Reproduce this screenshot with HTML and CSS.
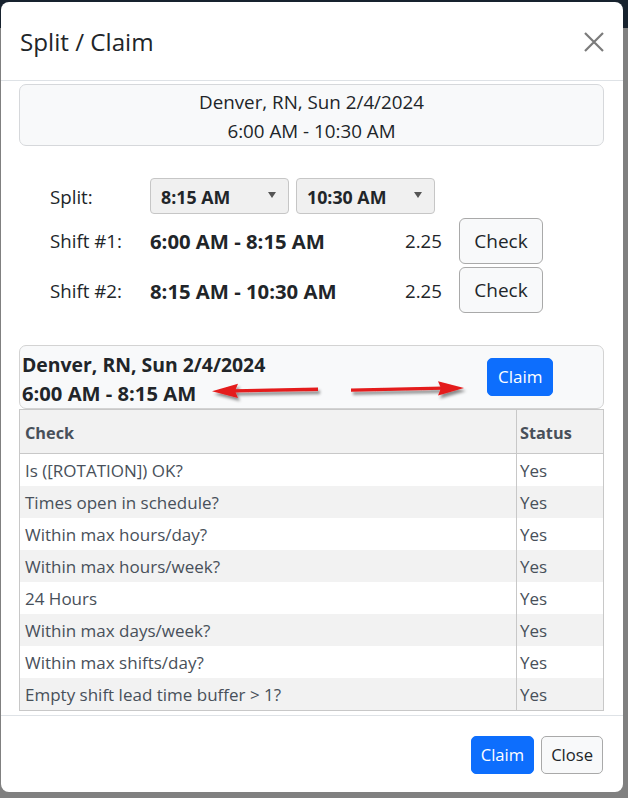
FILE: index.html
```html
<!DOCTYPE html>
<html lang="en">
<head>
<meta charset="utf-8">
<title>Split / Claim</title>
<link rel="stylesheet" href="styles.css">
</head>
<body>
<div class="modal">
  <div class="modal-header">
    <h5 class="modal-title">Split / Claim</h5>
    <button class="btn-close" aria-label="Close">
      <svg width="20" height="20" viewBox="0 0 20 20"><path d="M1 1 L19 19 M19 1 L1 19" stroke="#7b7b7b" stroke-width="2.2" fill="none"/></svg>
    </button>
  </div>
  <div class="modal-body">
    <div class="shift-box">
      <div>Denver, RN, Sun 2/4/2024</div>
      <div>6:00 AM - 10:30 AM</div>
    </div>

    <div class="split-grid">
      <div class="lbl lbl-split">Split:</div>
      <div class="selects">
        <div class="select"><span>8:15 AM</span><svg class="caret" width="8" height="6" viewBox="0 0 8 6"><path d="M0 0 H8 L4 6 Z" fill="#555"/></svg></div>
        <div class="select"><span>10:30 AM</span><svg class="caret" width="8" height="6" viewBox="0 0 8 6"><path d="M0 0 H8 L4 6 Z" fill="#555"/></svg></div>
      </div>

      <div class="lbl">Shift #1:</div>
      <div class="val">6:00 AM - 8:15 AM</div>
      <div class="hrs">2.25</div>
      <button class="btn btn-light btn-check">Check</button>

      <div class="lbl">Shift #2:</div>
      <div class="val">8:15 AM - 10:30 AM</div>
      <div class="hrs">2.25</div>
      <button class="btn btn-light btn-check">Check</button>
    </div>

    <div class="claim-card">
      <div class="claim-text">
        <div>Denver, RN, Sun 2/4/2024</div>
        <div class="claim-time">6:00 AM - 8:15 AM</div>
      </div>
      <button class="btn btn-primary">Claim</button>
      <svg class="arrows" width="585" height="64" viewBox="0 0 585 64">
        <defs>
          <filter id="sh" x="-10%" y="-50%" width="120%" height="250%">
            <feDropShadow dx="2" dy="3" stdDeviation="1.6" flood-color="#000" flood-opacity="0.45"/>
          </filter>
        </defs>
        <g filter="url(#sh)" fill="#e41b1b">
          <path d="M299 42.6 L299 46 L214 47.6 L214 44.2 Z"/>
          <path d="M193 46.2 L219 38.8 L216 46 L219 53 Z"/>
          <path d="M332 43.4 L332 46.8 L424 44.8 L424 41.4 Z"/>
          <path d="M445 43 L419 36.2 L422 43.2 L419 50.4 Z"/>
        </g>
      </svg>
    </div>

    <table class="checks">
      <colgroup><col class="c1"><col class="c2"></colgroup>
      <thead>
        <tr><th>Check</th><th>Status</th></tr>
      </thead>
      <tbody>
        <tr><td>Is ([ROTATION]) OK?</td><td>Yes</td></tr>
        <tr><td>Times open in schedule?</td><td>Yes</td></tr>
        <tr><td>Within max hours/day?</td><td>Yes</td></tr>
        <tr><td>Within max hours/week?</td><td>Yes</td></tr>
        <tr><td>24 Hours</td><td>Yes</td></tr>
        <tr><td>Within max days/week?</td><td>Yes</td></tr>
        <tr><td>Within max shifts/day?</td><td>Yes</td></tr>
        <tr><td>Empty shift lead time buffer &gt; 1?</td><td>Yes</td></tr>
      </tbody>
    </table>
  </div>
  <div class="modal-footer">
    <button class="btn btn-primary btn-foot">Claim</button>
    <button class="btn btn-light btn-foot">Close</button>
  </div>
</div>
</body>
</html>
```

FILE: styles.css
```css
* { box-sizing: border-box; }

html {
  background: linear-gradient(#17222e, #17222e) top left / 100% 28px no-repeat, #808080;
}

body {
  margin: 0;
  font-family: "Open Sans", "Noto Sans", sans-serif;
  color: #212529;
}

.modal {
  margin: 2px 0 0 1px;
  width: 622px;
  height: 790px;
  background: #fff;
  border-radius: 8px;
  display: flex;
  flex-direction: column;
  overflow: hidden;
}

.modal-header {
  height: 79px;
  flex: none;
  border-bottom: 1px solid #dee2e6;
  display: flex;
  align-items: center;
  justify-content: space-between;
  padding: 2px 19px 0 19px;
}

.modal-title {
  margin: 0;
  font-size: 24.2px;
  font-weight: 400;
  line-height: 1.2;
}

.btn-close {
  width: 20px;
  height: 20px;
  padding: 0;
  border: 0;
  background: none;
  display: block;
}
.btn-close svg { display: block; }

.modal-body {
  height: 634px;
  flex: none;
  padding: 3px 19px 0 18px;
}

.shift-box {
  height: 62px;
  border: 1px solid #d6d8db;
  border-radius: 7px;
  background: #f8f9fa;
  text-align: center;
  font-size: 18.8px;
  line-height: 29px;
  padding-top: 3px;
}

.split-grid {
  display: grid;
  grid-template-columns: 100px 255px 54px 84px;
  grid-template-rows: 36px 46px 46px;
  row-gap: 3.5px;
  margin: 32px 0 0 31px;
  align-items: center;
  font-size: 18.7px;
  line-height: 28px;
}
.lbl-split { padding-top: 4px; }

.selects {
  grid-column: 2 / span 3;
  display: flex;
  gap: 7px;
}

.select {
  width: 139px;
  height: 36px;
  background: #f0f0f0;
  border: 1px solid #c6c6c6;
  border-radius: 4px;
  display: flex;
  align-items: center;
  justify-content: space-between;
  padding: 1px 12px 0 10px;
  font-weight: 700;
  font-size: 17.8px;
}
.caret { display: block; margin-top: -3px; }

.val { font-weight: 700; font-size: 20.3px; padding-top: 1px; }
.lbl, .hrs { padding-top: 1px; }

.btn {
  font-family: inherit;
  font-size: 17px;
  line-height: 26px;
  padding: 5px 10px;
  border-radius: 5px;
  border: 1px solid transparent;
  margin: 0;
}
.btn-primary {
  background: #0d6efd;
  border-color: #0d6efd;
  color: #fff;
}
.btn-light {
  background: #f8f9fa;
  border-color: #a9a9a9;
  color: #212529;
}
.btn-check {
  width: 84px;
  height: 46px;
  font-size: 19px;
  line-height: 28px;
  padding: 8px 0;
  border-radius: 6px;
}
.btn-foot {
  font-size: 16.6px;
  padding: 5px 9px;
}

.claim-card {
  position: relative;
  margin-top: 32px;
  height: 64px;
  display: flex;
  align-items: center;
  border: 1px solid #d3d3d3;
  border-radius: 7px;
  background: #f8f9fa;
  padding: 0 0 0 2px;
}
.claim-text {
  width: 465px;
  font-weight: 700;
  font-size: 19.4px;
  line-height: 29px;
  padding-top: 3px;
}
.claim-time { font-size: 20.2px; }
.arrows {
  position: absolute;
  left: -1px;
  top: -1px;
  overflow: visible;
  pointer-events: none;
}

.checks {
  width: 585px;
  border-collapse: collapse;
  border: 1px solid #c8c8c8;
  color: #48505a;
  font-size: 17px;
  line-height: 26px;
}
.checks .c1 { width: 497px; }
.checks th {
  text-align: left;
  font-weight: 700;
  font-size: 16.3px;
  background: #f2f2f2;
  padding: 10px 5px 7px;
  border-bottom: 1px solid #c8c8c8;
}
.checks td {
  padding: 4px 5px 2px;
}
.checks th + th,
.checks td + td {
  border-left: 1px solid #c8c8c8;
  padding-left: 3px;
}
.checks tbody tr:nth-child(even) td { background: #f2f2f2; }

.modal-footer {
  height: 77px;
  flex: none;
  border-top: 1px solid #dee2e6;
  display: flex;
  justify-content: flex-end;
  align-items: flex-start;
  gap: 7px;
  padding: 20px 20px 0 0;
}
```
